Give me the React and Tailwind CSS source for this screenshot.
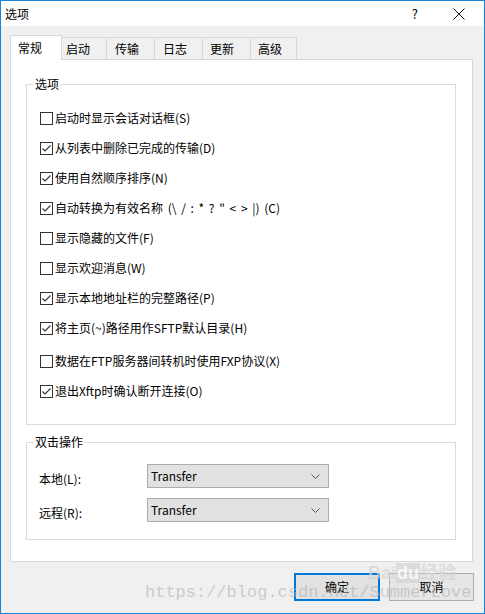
import React from "react";

const items = [
  ["启动时显示会话对话框(S)", false],
  ["从列表中删除已完成的传输(D)", true],
  ["使用自然顺序排序(N)", true],
  ["自动转换为有效名称 (\\ / : * ? \" < > |) (C)", true],
  ["显示隐藏的文件(F)", false],
  ["显示欢迎消息(W)", false],
  ["显示本地地址栏的完整路径(P)", true],
  ["将主页(~)路径用作SFTP默认目录(H)", true],
  ["数据在FTP服务器间转机时使用FXP协议(X)", false],
  ["退出Xftp时确认断开连接(O)", true],
];

const tabs = [
  ["启动", "w-[45px] pl-[4px]"],
  ["传输", "w-[48px] pl-[8px]"],
  ["日志", "w-[48px] pl-[8px]"],
  ["更新", "w-[48px] pl-[7px]"],
  ["高级", "w-[46px] pl-[7px]"],
];

function Check({ checked }) {
  return (
    <span className="w-[13px] h-[13px] border border-[#333333] bg-white flex items-center justify-center shrink-0">
      {checked && (
        <svg width="11" height="11" viewBox="0 0 11 11">
          <polyline points="1.5,5.5 4,8 9.5,2.5" fill="none" stroke="#333" strokeWidth="1.1" />
        </svg>
      )}
    </span>
  );
}

function Combo() {
  return (
    <div className="w-[182px] h-[24px] border border-[#adadad] bg-[#e1e1e1] flex items-center pl-[3px] pr-[8px]">
      <span className="flex-1">Transfer</span>
      <svg width="9" height="5" viewBox="0 0 9 5">
        <polyline points="0.5,0.5 4.5,4.5 8.5,0.5" fill="none" stroke="#555" strokeWidth="1" />
      </svg>
    </div>
  );
}

export default function App() {
  return (
    <div
      className="relative w-[485px] h-[614px] border border-[#1883d7] bg-[#f0f0f0] flex flex-col text-[12px] text-black leading-[16px]"
      style={{ fontFamily: '"Noto Sans CJK SC", "Noto Sans", sans-serif' }}
    >
      {/* title bar */}
      <div className="h-[25px] bg-white flex items-center pl-[4px] shrink-0">
        <span>选项</span>
        <span className="ml-auto text-[13px]">?</span>
        <svg className="ml-[35px] mr-[19px]" width="12" height="12" viewBox="0 0 12 12">
          <line x1="0.5" y1="0.5" x2="11.5" y2="11.5" stroke="#111" strokeWidth="1" />
          <line x1="11.5" y1="0.5" x2="0.5" y2="11.5" stroke="#111" strokeWidth="1" />
        </svg>
      </div>

      <div className="px-[9px] pt-[9px] flex flex-col">
        {/* tabs */}
        <div className="relative z-10 h-[25px] -mb-px flex items-end">
          <div className="w-[52px] h-[25px] border border-b-0 border-[#d9d9d9] bg-white pl-[7px] flex items-center">
            常规
          </div>
          {tabs.map(([t, c]) => (
            <div
              key={t}
              className={`${c} h-[23px] border-t border-r border-b border-[#d9d9d9] bg-[#f0f0f0] flex items-center`}
            >
              {t}
            </div>
          ))}
        </div>

        {/* pane */}
        <div className="w-[463px] h-[503px] border border-[#d9d9d9] bg-white flex flex-col">
          <fieldset className="ml-[15px] mt-[16px] w-[430px] border border-[#dcdcdc] pb-[18px]">
            <legend className="ml-[7px] px-[1px]">选项</legend>
            <div className="pt-[11px] pl-[13px] flex flex-col">
              {items.map(([label, checked], i) => (
                <div
                  key={i}
                  className={`h-[30px] flex items-center gap-[2px] ${i === 8 ? "mt-[3px]" : ""}`}
                >
                  <Check checked={checked} />
                  <span className={`whitespace-pre ${i === 3 ? "[word-spacing:2px]" : ""}`}>{label}</span>
                </div>
              ))}
            </div>
          </fieldset>

          <fieldset className="ml-[15px] mt-[9px] w-[430px] border border-[#dcdcdc] pb-[17px]">
            <legend className="ml-[7px] px-[1px]">双击操作</legend>
            <div className="pt-[14px] pl-[12px] flex flex-col gap-[10px]">
              <div className="flex items-center">
                <div className="w-[108px] h-[24px] flex items-center pt-[5px]">本地(L):</div>
                <Combo />
              </div>
              <div className="flex items-center">
                <div className="w-[108px] h-[24px] flex items-center pt-[5px]">远程(R):</div>
                <Combo />
              </div>
            </div>
          </fieldset>
        </div>

        {/* buttons */}
        <div className="mt-[11px] flex justify-end gap-[9px] pr-[1px]">
          <button className="w-[86px] h-[28px] border-2 border-[#0078d7] bg-[#e1e1e1] flex items-center justify-center">
            确定
          </button>
          <button className="w-[85px] h-[28px] border border-[#adadad] bg-[#e6e6e6] flex items-center justify-center">
            取消
          </button>
        </div>
      </div>

      {/* watermark overlay */}
      <div
        className="absolute left-[144px] top-[581px] text-[17px] leading-[22px] text-[#b4b4b4] opacity-60 whitespace-pre pointer-events-none"
        style={{ fontFamily: '"Liberation Mono", monospace' }}
      >
        https://blog.csdn.net/SummerLove
      </div>
      <div
        className="absolute left-[367px] top-[561px] text-[18px] leading-[22px] font-bold text-[#d4d4d4] opacity-70 whitespace-pre pointer-events-none"
        style={{ fontFamily: '"Liberation Sans", "Noto Sans CJK SC", sans-serif' }}
      >
        Bai<span className="bg-[#d4d4d4] text-white px-[1px]">du</span>经验
      </div>
    </div>
  );
}
